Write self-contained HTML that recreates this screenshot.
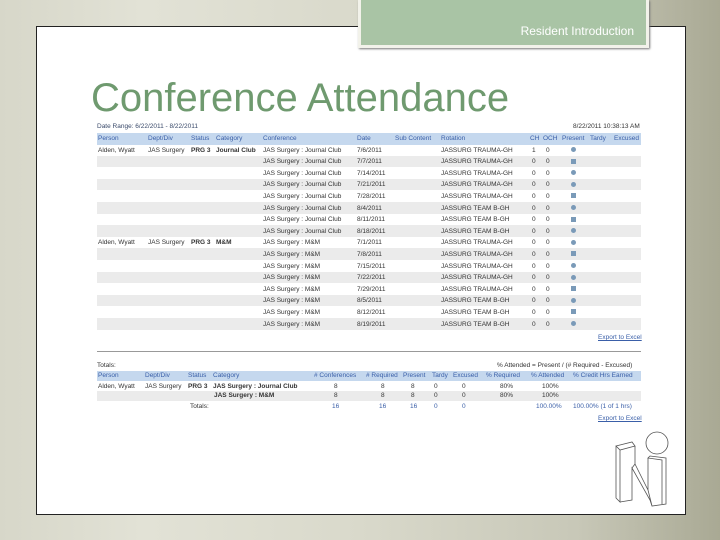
<!DOCTYPE html>
<html><head><meta charset="utf-8"><style>
*{margin:0;padding:0;box-sizing:border-box}
body{width:720px;height:540px;overflow:hidden;position:relative;font-family:"Liberation Sans",sans-serif;
background:linear-gradient(90deg,#d7d7c9 0%,#e2e2d6 20%,#d9d9cb 50%,#c8c8b8 80%,#a9a994 100%);}
.card{position:absolute;left:36px;top:26px;width:650px;height:489px;background:#fff;border:1px solid #222;}
.tab{position:absolute;left:358px;top:0;width:291px;height:48px;background:#a9c4a5;border:3px solid #f2f2ea;border-top:none;box-shadow:1px 1px 2px #777;}
.tab span{position:absolute;right:12px;top:24px;color:#fff;font-size:12px}
h1{position:absolute;left:91px;top:76px;font-weight:normal;font-size:40px;color:#6f9a6f;white-space:nowrap}
.t{position:absolute;font-size:6.5px;color:#333;white-space:nowrap;line-height:11px}
.row{position:absolute;left:97px;width:544px;height:11.6px}
.hd{background:#c5d8ee}
.g{background:#ebebeb}
.b{color:#3a5fa8}
.bd{font-weight:bold}
.dot{position:absolute;width:5px;height:5px;background:#7a9ab8;}
</style></head><body>
<div class="card"></div>
<div class="tab"><span>Resident Introduction</span></div>
<h1>Conference Attendance</h1>
<div class="t" style="left:97px;top:121px;color:#3a4a6a">Date Range: 6/22/2011 - 8/22/2011</div>
<div class="t" style="left:573px;top:121px">8/22/2011 10:38:13 AM</div>
<div class="row hd" style="top:133px"></div>
<div id="rows"></div>
<div class="t b" style="left:598px;top:332px;text-decoration:underline">Export to Excel</div>
<div style="position:absolute;left:97px;top:351px;width:544px;height:1px;background:#999"></div>
<div class="t" style="left:97px;top:360px">Totals:</div>
<div class="t" style="left:497px;top:360px">% Attended = Present / (# Required - Excused)</div>
<div class="row hd" style="top:371px;height:10px"></div>
<div class="row g" style="top:391px;height:10px"></div>
<div id="t2"></div>
<div class="t b" style="left:598px;top:413px;text-decoration:underline">Export to Excel</div>
<svg style="position:absolute;left:610px;top:428px" width="62" height="82" viewBox="0 0 62 82" fill="none" stroke="#555" stroke-width="0.8">
<circle cx="47" cy="15" r="11"/>
<path d="M6 18 L22 14 L25 18 L10 22 Z M6 18 L6 70 L10 74 L10 22 M10 74 L22 72 L22 40 L40 72 L42 78 L56 76 L56 30 L40 28 L38 30 L52 32 L52 76 M38 30 L38 62 L25 36 L25 18 M22 40 L25 36 M38 62 L42 78"/>
</svg>
<script>
var d=[["Alden, Wyatt","JAS Surgery","PRG 3","Journal Club","JAS Surgery : Journal Club","7/6/2011","JASSURG TRAUMA-GH","1"],
["","","","","JAS Surgery : Journal Club","7/7/2011","JASSURG TRAUMA-GH","0"],
["","","","","JAS Surgery : Journal Club","7/14/2011","JASSURG TRAUMA-GH","0"],
["","","","","JAS Surgery : Journal Club","7/21/2011","JASSURG TRAUMA-GH","0"],
["","","","","JAS Surgery : Journal Club","7/28/2011","JASSURG TRAUMA-GH","0"],
["","","","","JAS Surgery : Journal Club","8/4/2011","JASSURG TEAM B-GH","0"],
["","","","","JAS Surgery : Journal Club","8/11/2011","JASSURG TEAM B-GH","0"],
["","","","","JAS Surgery : Journal Club","8/18/2011","JASSURG TEAM B-GH","0"],
["Alden, Wyatt","JAS Surgery","PRG 3","M&M","JAS Surgery : M&M","7/1/2011","JASSURG TRAUMA-GH","0"],
["","","","","JAS Surgery : M&M","7/8/2011","JASSURG TRAUMA-GH","0"],
["","","","","JAS Surgery : M&M","7/15/2011","JASSURG TRAUMA-GH","0"],
["","","","","JAS Surgery : M&M","7/22/2011","JASSURG TRAUMA-GH","0"],
["","","","","JAS Surgery : M&M","7/29/2011","JASSURG TRAUMA-GH","0"],
["","","","","JAS Surgery : M&M","8/5/2011","JASSURG TEAM B-GH","0"],
["","","","","JAS Surgery : M&M","8/12/2011","JASSURG TEAM B-GH","0"],
["","","","","JAS Surgery : M&M","8/19/2011","JASSURG TEAM B-GH","0"]];
var h='';
function T(x,y,s,c){return '<div class="t '+(c||'')+'" style="left:'+x+'px;top:'+y+'px">'+s+'</div>';}
var hx=[[98,"Person"],[148,"Dept/Div"],[191,"Status"],[216,"Category"],[263,"Conference"],[357,"Date"],[395,"Sub Content"],[441,"Rotation"],[530,"CH"],[543,"OCH"],[562,"Present"],[590,"Tardy"],[614,"Excused"]];
hx.forEach(function(c){h+=T(c[0],133,c[1],'b')});
var sq=[0,1,0,0,1,0,1,0,0,1,0,0,1,0,1,0];
d.forEach(function(r,i){var y=144+i*11.6;
if(i%2)h+='<div class="row g" style="top:'+y+'px"></div>';
var e=function(s){return s.replace(/&/g,'&amp;')};
var xs=[98,148,191,216,263,357,441,532];
r.forEach(function(v,j){if(v)h+=T(xs[j],y+0.5,e(v),(j==2||j==3)?'bd':'')});
h+=T(546,y+0.5,'0');
h+='<div class="dot" style="left:571px;top:'+(y+3)+'px;border-radius:'+(sq[i]?'0':'50%')+'"></div>';});
document.getElementById('rows').innerHTML=h;
var g='';
[[98,"Person"],[145,"Dept/Div"],[188,"Status"],[213,"Category"],[314,"# Conferences"],[366,"# Required"],[403,"Present"],[432,"Tardy"],[453,"Excused"],[486,"% Required"],[531,"% Attended"],[573,"% Credit Hrs Earned"]].forEach(function(c){g+=T(c[0],370,c[1],'b')});
g+=T(98,381,'Alden, Wyatt')+T(145,381,'JAS Surgery')+T(188,381,'PRG 3','bd')+T(213,381,'JAS Surgery : Journal Club','bd');
g+=T(214,390,'JAS Surgery : M&amp;M','bd');
[381,390].forEach(function(y){g+=T(334,y,'8')+T(381,y,'8')+T(411,y,'8')+T(434,y,'0')+T(462,y,'0')+T(500,y,'80%')+T(542,y,'100%');});
g+=T(190,401,'Totals:');
[[332,'16'],[379,'16'],[410,'16'],[434,'0'],[462,'0'],[536,'100.00%'],[573,'100.00% (1 of 1 hrs)']].forEach(function(c){g+=T(c[0],401,c[1],'b')});
document.getElementById('t2').innerHTML=g;
</script>
</body></html>
